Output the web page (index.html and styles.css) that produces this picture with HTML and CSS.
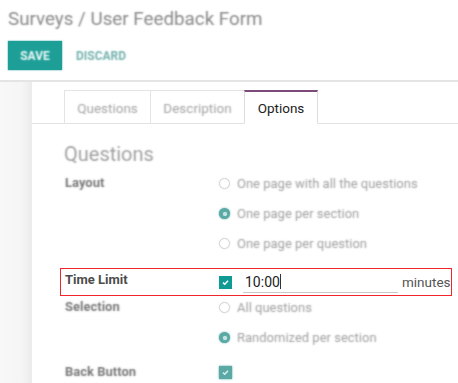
FILE: index.html
```html
<!DOCTYPE html>
<html>
<head>
<meta charset="utf-8">
<link rel="stylesheet" href="styles.css">
</head>
<body>
<div class="header">
  <div class="crumb soft-text">Surveys / User Feedback Form</div>
  <div class="buttons">
    <span class="btn-save"><span class="soft-text">SAVE</span></span>
    <span class="btn-discard soft-text">DISCARD</span>
  </div>
</div>
<div class="main">
  <div class="gutter"></div>
  <div class="sheet">
    <div class="tabs">
      <div class="tab"><span class="soft-text">Questions</span></div>
      <div class="tab"><span class="soft-text">Description</span></div>
      <div class="tab active">Options</div>
    </div>
    <div class="body">
      <h2 class="title soft-text">Questions</h2>
      <div class="row">
        <div class="label soft-text">Layout</div>
        <div class="opts">
          <div class="opt"><span class="radio"></span><span class="soft-text">One page with all the questions</span></div>
          <div class="opt"><span class="radio on"></span><span class="soft-text">One page per section</span></div>
          <div class="opt"><span class="radio"></span><span class="soft-text">One page per question</span></div>
        </div>
      </div>
      <div class="tlrow">
        <div class="label strong">Time Limit</div>
        <div class="tl">
          <span class="check"><svg width="9" height="9" viewBox="0 0 9 9"><path d="M2 4.6 L3.8 6.3 L7 2.8" fill="none" stroke="#fff" stroke-width="1.5"/></svg></span>
          <span class="input">10:00<span class="caret"></span></span>
          <span class="unit">minutes</span>
        </div>
      </div>
      <div class="row sel">
        <div class="label soft-text">Selection</div>
        <div class="opts">
          <div class="opt first"><span class="radio"></span><span class="soft-text">All questions</span></div>
          <div class="opt"><span class="radio on"></span><span class="soft-text">Randomized per section</span></div>
        </div>
      </div>
      <div class="row back">
        <div class="label soft-text">Back Button</div>
        <div class="opts">
          <div class="opt"><span class="check soft"><svg width="9" height="9" viewBox="0 0 9 9"><path d="M2 4.6 L3.8 6.3 L7 2.8" fill="none" stroke="#dcefed" stroke-width="1.5"/></svg></span></div>
        </div>
      </div>
    </div>
  </div>
</div>
</body>
</html>
```
FILE: styles.css
```css
html, body {
  margin: 0;
  padding: 0;
  background: #fff;
  font-family: Roboto, "Noto Sans", sans-serif;
  overflow: hidden;
}
body {
  width: 458px;
  height: 383px;
}
.soft-text {
  color: transparent !important;
  text-shadow: 0 0 1.7px var(--c, #999);
}
.header {
  height: 82px;
  box-sizing: border-box;
  padding: 7px 8px 0;
  border-bottom: 2px solid #e4e4e4;
}
.crumb {
  font-size: 18.8px;
  --c: #8a8a8a;
  line-height: 24px;
}
.buttons {
  display: flex;
  align-items: center;
  gap: 14px;
  margin-top: 10px;
}
.btn-save {
  background: #1d9f98;
  --c: #f4fbfa;
  font-weight: 700;
  font-size: 12px;
  width: 54px;
  height: 29px;
  display: flex;
  align-items: center;
  justify-content: center;
  box-shadow: 0 0 1.5px #1d9f98;
}
.btn-discard {
  --c: #76b3af;
  font-weight: 700;
  font-size: 12px;
}
.main {
  display: flex;
  height: 301px;
}
.gutter {
  width: 32px;
  flex: none;
  background: linear-gradient(to right, #f8f8f8 0, #f5f5f5 22px, #ebebeb 32px);
}
.sheet {
  flex: 1;
  min-width: 0;
  background: #fff;
}
.tabs {
  display: flex;
  padding: 8px 0 0 32px;
  border-bottom: 1px solid #e2e2e2;
  height: 33px;
}
.tab {
  box-sizing: border-box;
  height: 34px;
  border: 1px solid #e4e4e4;
  border-bottom: none;
  display: flex;
  align-items: center;
  justify-content: center;
  font-size: 13.5px;
  --c: #a3a3a3;
  margin-right: -1px;
}
.tab:nth-child(1) { width: 87px; }
.tab:nth-child(2) { width: 95px; }
.tab.active {
  width: 74px;
  color: #222;
  background: #fff;
  border-top: 2px solid #7c4b7a;
  border-color: #7c4b7a #ddd #fff #ddd;
  border-bottom: 1px solid #fff;
  position: relative;
  z-index: 1;
}
.body {
  padding: 18px 0 0 30px;
}
.title {
  margin: 0 0 2px 2px;
  font-size: 20px;
  font-weight: 400;
  --c: #a2a2a2;
  line-height: 24px;
}
.row {
  display: flex;
  font-size: 13px;
}
.label {
  width: 154px;
  flex: none;
  padding-left: 3px;
  font-weight: 700;
  --c: #7a7a7a;
  line-height: 30px;
}
.opts {
  display: flex;
  flex-direction: column;
}
.opt {
  display: flex;
  align-items: center;
  height: 30px;
  --c: #a0a0a0;
}
.radio {
  width: 11px;
  height: 11px;
  border: 1px solid #d2d2d2;
  border-radius: 50%;
  margin-right: 7px;
  box-sizing: border-box;
  position: relative;
  box-shadow: 0 0 1.5px #ddd;
}
.radio.on {
  border: none;
  background: #5aa9a4;
  box-shadow: 0 0 2px #5aa9a4;
}
.radio.on::after {
  content: "";
  position: absolute;
  left: 4px;
  top: 4px;
  width: 4px;
  height: 4px;
  border-radius: 50%;
  background: #c6e4e1;
  box-shadow: 0 0 1px #c6e4e1;
}
.tlrow {
  display: flex;
  align-items: center;
  font-size: 13px;
  margin: 10px 6px 0 -2px;
  height: 28px;
  box-sizing: border-box;
  border: 1px solid #f0262b;
}
.tlrow .label {
  color: #4c4c4c;
  padding-left: 4px;
  line-height: 18px;
  margin-top: -5px;
}
.tl {
  display: flex;
  align-items: center;
  flex: 1;
}
.check {
  width: 13px;
  height: 13px;
  background: #0f9b94;
  display: flex;
  align-items: center;
  justify-content: center;
  flex: none;
}
.input {
  margin-left: 11px;
  width: 155px;
  height: 22px;
  border-bottom: 1px solid #c8c8c8;
  box-sizing: border-box;
  font-size: 14px;
  color: #222;
  padding-left: 2px;
  line-height: 20px;
  display: flex;
  align-items: center;
}
.caret {
  display: inline-block;
  width: 1px;
  height: 15px;
  background: #333;
}
.unit {
  margin-left: 4px;
  font-size: 13.5px;
  color: #555;
}
.sel .label {
  line-height: 22px;
}
.sel .opt.first {
  height: 22px;
  margin-bottom: 4px;
}
.back {
  margin-top: 5px;
}
.check.soft {
  background: #5aa9a4;
  box-shadow: 0 0 2px #5aa9a4;
}
```
